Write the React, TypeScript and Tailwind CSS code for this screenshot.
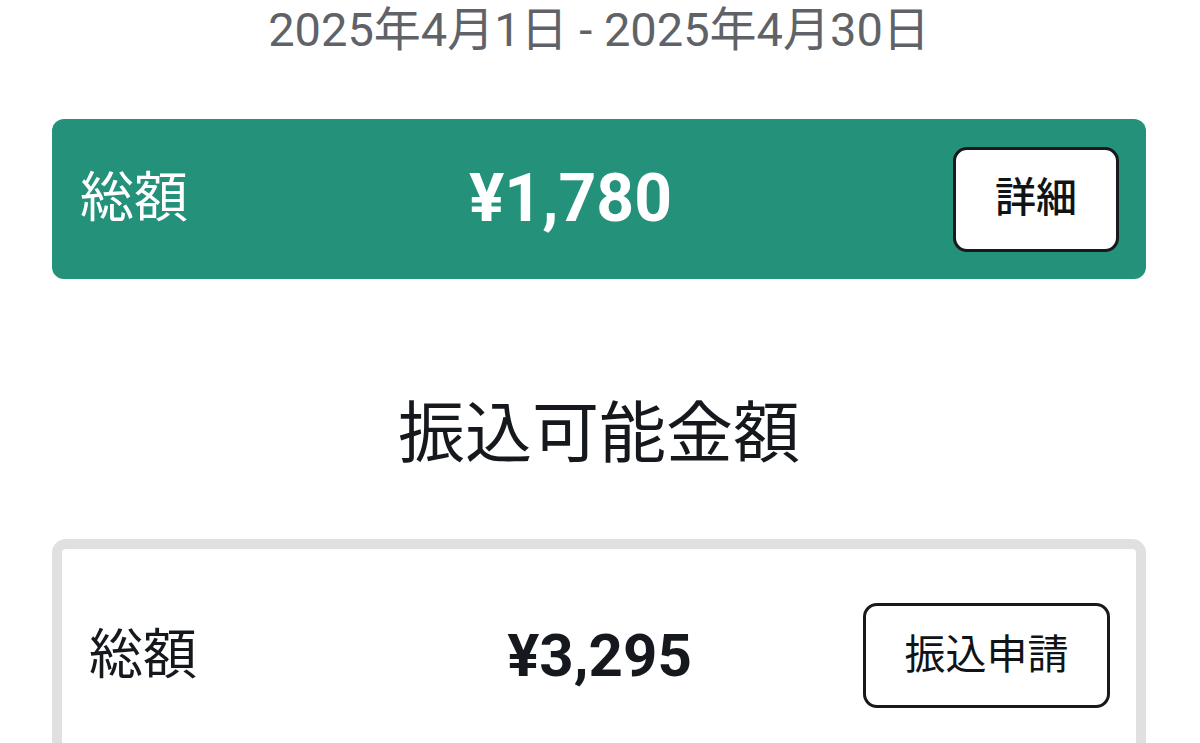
export default function App() {
  return (
    <div className="min-h-screen overflow-hidden bg-white pl-[52px] pr-[54px] font-['Roboto','Noto_Sans_CJK_JP',sans-serif]">
      {/* Period */}
      <p className="text-center text-[47px] leading-[60px] text-[#5f6368]">2025年4月1日 - 2025年4月30日</p>

      {/* Total summary */}
      <div className="mt-[59px] flex h-[160px] items-center justify-between rounded-xl bg-[#24917a] pl-[28px] pr-[27px]">
        <span className="text-[54px] leading-none text-white">総額</span>
        <span className="text-[66px] font-bold leading-none text-white">¥1,780</span>
        <button className="flex h-[105px] w-[166px] items-center justify-center rounded-[14px] border-[3px] border-[#17191c] bg-white text-[41px] font-medium text-[#111417]">
          詳細
        </button>
      </div>

      <h2 className="mt-[115px] text-center text-[67px] leading-[80px] text-[#15191e]">振込可能金額</h2>

      {/* Transferable amount */}
      <div className="mt-[65px] rounded-[14px] border-[10px] border-[#e0e0e0] pb-[80px] pl-[27px] pr-[26px] pt-[54px]">
        <div className="grid grid-cols-3 items-center">
          <span className="text-[54px] leading-none text-[#15191e]">総額</span>
          <span className="text-center text-[60px] font-bold leading-none text-[#15191e]">¥3,295</span>
          <div className="flex justify-end">
            <button className="flex h-[105px] w-[247px] items-center justify-center rounded-[14px] border-[3px] border-[#17191c] bg-white text-[41px] text-[#111417]">
              振込申請
            </button>
          </div>
        </div>
      </div>
    </div>
  );
}
